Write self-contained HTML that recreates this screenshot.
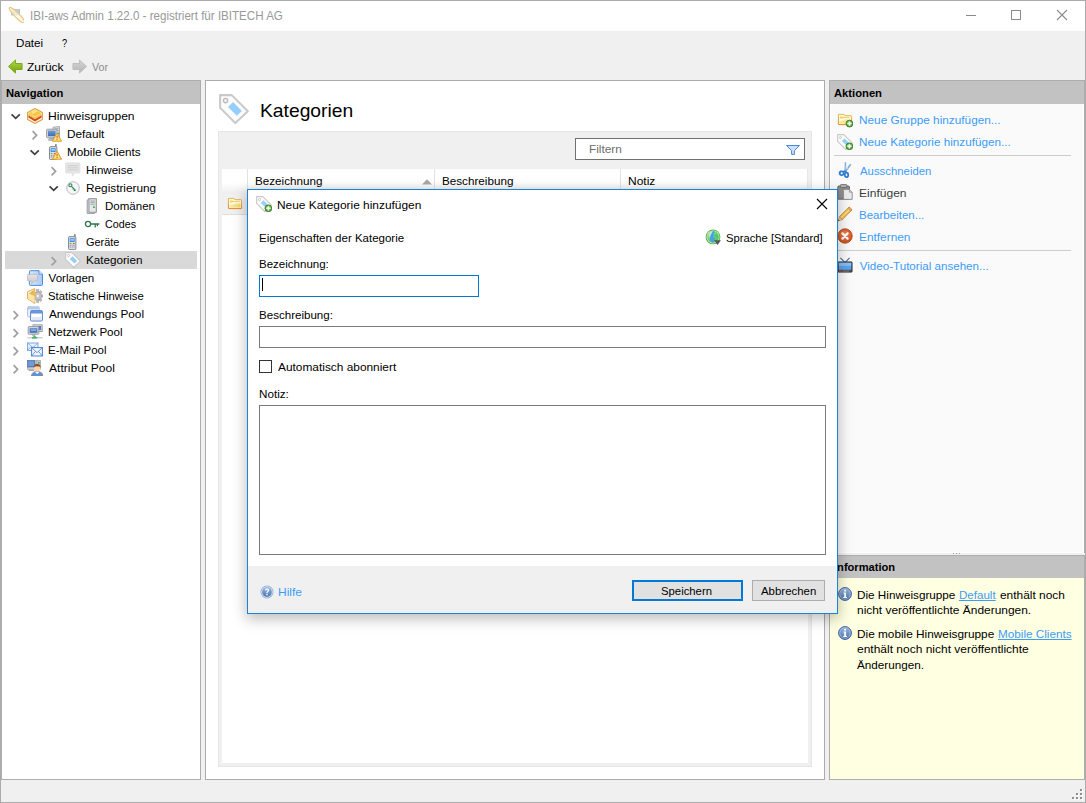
<!DOCTYPE html>
<html>
<head>
<meta charset="utf-8">
<title>IBI-aws Admin</title>
<style>
html,body{margin:0;padding:0;}
body{width:1086px;height:803px;overflow:hidden;background:#f0f0f0;font-family:"Liberation Sans",sans-serif;font-size:12px;color:#000;position:relative;}
.abs{position:absolute;}
.t{position:absolute;white-space:pre;transform-origin:0 0;}
div{box-sizing:border-box;}
</style>
</head>
<body>

<svg width="0" height="0" style="position:absolute">
<defs>
<linearGradient id="gGreen" x1="0" y1="0" x2="0" y2="1"><stop offset="0" stop-color="#b4dc3c"/><stop offset="1" stop-color="#6ea014"/></linearGradient>
<linearGradient id="gGray" x1="0" y1="0" x2="0" y2="1"><stop offset="0" stop-color="#d6d6d6"/><stop offset="1" stop-color="#b4b4b4"/></linearGradient>
<linearGradient id="gFolder" x1="0" y1="0" x2="1" y2="1"><stop offset="0" stop-color="#fdf4c4"/><stop offset="1" stop-color="#f6d24e"/></linearGradient>
<linearGradient id="gFolderS" x1="0" y1="0" x2="0" y2="1"><stop offset="0" stop-color="#e2bc48"/><stop offset="1" stop-color="#e0862c"/></linearGradient>
<linearGradient id="gScreen" x1="0" y1="0" x2="0" y2="1"><stop offset="0" stop-color="#6e9ad8"/><stop offset="1" stop-color="#3c6cb8"/></linearGradient>
<linearGradient id="gInfo" x1="0" y1="0" x2="0" y2="1"><stop offset="0" stop-color="#9db9dc"/><stop offset="1" stop-color="#4a74b0"/></linearGradient>
<radialGradient id="gGlobe" cx="0.35" cy="0.3" r="0.8"><stop offset="0" stop-color="#b8ecb0"/><stop offset="1" stop-color="#3cb850"/></radialGradient>
<radialGradient id="gRed" cx="0.5" cy="0.4" r="0.6"><stop offset="0" stop-color="#f08a5a"/><stop offset="1" stop-color="#c84a1c"/></radialGradient>
<radialGradient id="gPlus" cx="0.5" cy="0.4" r="0.6"><stop offset="0" stop-color="#8ed06a"/><stop offset="1" stop-color="#3e9a2e"/></radialGradient>
<linearGradient id="gPage" x1="0" y1="0" x2="1" y2="0"><stop offset="0" stop-color="#dbe9fc"/><stop offset="1" stop-color="#a9c9f5"/></linearGradient>
<linearGradient id="gBub" x1="0" y1="0" x2="0" y2="1"><stop offset="0" stop-color="#e4e4e4"/><stop offset="1" stop-color="#c8c8c8"/></linearGradient>
<linearGradient id="gHdr" x1="0" y1="0" x2="0" y2="1"><stop offset="0" stop-color="#ffffff"/><stop offset="0.6" stop-color="#fafafa"/><stop offset="1" stop-color="#e9e9e9"/></linearGradient>
</defs></svg>

<!-- window frame -->
<div class="abs" style="left:0;top:0;width:1086px;height:803px;border:1px solid #ababab;background:#f0f0f0;"></div>
<div class="abs" style="left:1px;top:1px;width:1084px;height:30px;background:#fff;"></div>
<!-- window controls -->
<svg class="abs" style="left:960px;top:5px" width="120" height="20" viewBox="0 0 120 20">
<path d="M6 10.5 H16" stroke="#8a8a8a" stroke-width="1" fill="none"/>
<rect x="51.5" y="5.5" width="9" height="9" stroke="#8a8a8a" stroke-width="1" fill="none"/>
<path d="M97 5 L107 15 M107 5 L97 15" stroke="#8a8a8a" stroke-width="1.1" fill="none"/>
</svg>

<!-- NAV PANEL -->
<div class="abs" style="left:1px;top:80px;width:200px;height:700px;background:#fff;border:1px solid #adadad;"></div>
<div class="abs" style="left:2px;top:81px;width:198px;height:23px;background:#c2c2c2;"></div>
<div class="abs" style="left:5px;top:251px;width:192px;height:18px;background:#d9d9d9;"></div>

<!-- CENTER PANEL -->
<div class="abs" style="left:205px;top:80px;width:620px;height:700px;background:#fff;border:1px solid #ababab;"></div>
<div class="abs" style="left:218px;top:131px;width:594px;height:636px;background:#f0f0f0;border:1px solid #e6e6e6;"></div>
<div class="abs" style="left:222px;top:169px;width:586px;height:594px;background:#fff;"></div>
<!-- filter box -->
<div class="abs" style="left:575px;top:138px;width:230px;height:22px;background:#fff;border:1px solid #707070;"></div>
<!-- table header -->
<div class="abs" style="left:222px;top:169px;width:586px;height:25px;background:linear-gradient(#fff 0,#fff 55%,#ededed 100%);"></div>
<div class="abs" style="left:247px;top:169px;width:1px;height:25px;background:#e2e2e2;"></div>
<div class="abs" style="left:434px;top:169px;width:1px;height:25px;background:#e2e2e2;"></div>
<div class="abs" style="left:620px;top:169px;width:1px;height:25px;background:#e2e2e2;"></div>
<div class="abs" style="left:807px;top:169px;width:1px;height:25px;background:#e8e8e8;"></div>
<svg class="abs" style="left:422px;top:179px" width="10" height="6" viewBox="0 0 10 6"><path d="M0 5.5 L5 0.3 L10 5.5Z" fill="#a8a8a8"/></svg>
<!-- first row -->
<div class="abs" style="left:222px;top:194px;width:586px;height:21px;background:#f0f0f0;border-bottom:1px solid #e0e0e0;"></div>

<!-- RIGHT PANEL -->
<div class="abs" style="left:829px;top:80px;width:256px;height:473px;background:#fafafa;border:1px solid #adadad;border-bottom:none;box-shadow:inset 0 0 0 1px #fff;"></div>
<div class="abs" style="left:830px;top:81px;width:254px;height:23px;background:#c2c2c2;"></div>
<div class="abs" style="left:834px;top:155px;width:237px;height:1px;background:#cdcdcd;"></div>
<div class="abs" style="left:834px;top:250px;width:237px;height:1px;background:#cdcdcd;"></div>
<!-- splitter dots -->
<div class="abs" style="left:953px;top:553px;width:1px;height:1px;background:#9a9a9a;box-shadow:3px 0 #9a9a9a,6px 0 #9a9a9a;"></div>
<!-- info panel -->
<div class="abs" style="left:829px;top:555px;width:256px;height:225px;background:#ffffe1;border:1px solid #adadad;"></div>
<div class="abs" style="left:830px;top:556px;width:254px;height:22px;background:#c2c2c2;"></div>

<!-- resize grip -->
<svg class="abs" style="left:1071px;top:789px" width="13" height="13" viewBox="0 0 13 13"><g fill="#fff" transform="translate(1,1)"><rect x="9" y="0" width="2" height="2"/><rect x="5" y="4" width="2" height="2"/><rect x="9" y="4" width="2" height="2"/><rect x="1" y="8" width="2" height="2"/><rect x="5" y="8" width="2" height="2"/><rect x="9" y="8" width="2" height="2"/></g><g fill="#8e8e8e"><rect x="9" y="0" width="2" height="2"/><rect x="5" y="4" width="2" height="2"/><rect x="9" y="4" width="2" height="2"/><rect x="1" y="8" width="2" height="2"/><rect x="5" y="8" width="2" height="2"/><rect x="9" y="8" width="2" height="2"/></g></svg>

<svg class="abs" style="left:8px;top:7px" width="16" height="16" viewBox="0 0 16 16" opacity=".8"><rect x="3.2" y="2.2" width="8.8" height="6.2" fill="#8fb0cc"/>
<rect x="4" y="3" width="7.2" height="4.6" fill="#a9c4da"/>
<path d="M5.6 6.6 L7.2 3.4 L8.8 6.6 M6.3 5.6 H8.1" stroke="#c9a03a" stroke-width=".9" fill="none"/>
<ellipse cx="9" cy="8.2" rx="10.6" ry="2.3" transform="rotate(45 9 8.2)" fill="#fff8e6" fill-opacity=".7" stroke="#ecb656" stroke-width="1.2"/></svg>
<svg class="abs" style="left:8px;top:59px" width="15" height="15" viewBox="0 0 16 15" ><path d="M0.5 7.5 L8 0.5 V4.3 H15 V10.7 H8 V14.5 Z" fill="url(#gGreen)" stroke="#78a818" stroke-width="1" stroke-linejoin="round"/></svg>
<svg class="abs" style="left:72px;top:59px" width="15" height="15" viewBox="0 0 16 15" ><path d="M15.5 7.5 L8 0.5 V4.3 H1 V10.7 H8 V14.5 Z" fill="url(#gGray)" stroke="#bdbdbd" stroke-width="1" stroke-linejoin="round"/></svg>
<svg class="abs" style="left:27px;top:108px" width="16" height="16" viewBox="0 0 16 16" ><path d="M8 0.6 L15.4 4.4 V11.6 L8 15.4 L0.6 11.6 V4.4 Z" fill="#fdf3d4" stroke="#d9a440" stroke-width="1.1" stroke-linejoin="round"/>
<path d="M8 1.6 L14.4 4.9 L8 8.6 L1.6 4.9 Z" fill="#f5c542"/>
<path d="M8 1.6 L11 3.2 L6 6 L3.5 4 Z" fill="#fbe08a"/>
<path d="M1.4 7.2 L8 11 L14.6 7.2 V9.6 L8 13.4 L1.4 9.6 Z" fill="#d8462c"/>
<path d="M1.4 5.2 L8 9 L14.6 5.2 V7.2 L8 11 L1.4 7.2 Z" fill="#f2c44a"/></svg>
<svg class="abs" style="left:8px;top:108px" width="16" height="16" viewBox="0 0 16 16" ><path d="M3.6 6.3 L7.7 10.4 L11.8 6.3" fill="none" stroke="#404040" stroke-width="1.7"/></svg>
<svg class="abs" style="left:46px;top:126px" width="16" height="16" viewBox="0 0 16 16" ><path d="M7 1.2 L13.5 0.5 V12 H7Z" fill="#d8dade" stroke="#9a9ea6" stroke-width=".8"/>
<rect x="9" y="2.5" width="3.5" height=".8" fill="#8e9298"/><rect x="9" y="4.2" width="3.5" height=".8" fill="#8e9298"/>
<rect x="0.6" y="3.2" width="10.4" height="8.6" rx="1" fill="#d4d7dc" stroke="#8f949c" stroke-width=".9"/>
<rect x="2" y="4.6" width="7.6" height="5.6" fill="url(#gScreen)"/>
<rect x="3.2" y="12" width="5" height="1.2" fill="#a8acb4"/><rect x="2.4" y="13.2" width="6.6" height="1.3" rx=".5" fill="#c2c6cc" stroke="#8f949c" stroke-width=".5"/>
<circle cx="12.6" cy="7.4" r=".9" fill="#4cb848"/><path d="M11 7.2 L15.6 15.2 H6.4 Z" fill="#fde480" stroke="#e0962a" stroke-width="1" stroke-linejoin="round"/>
<rect x="10.5" y="9.8" width="1.1" height="2.6" fill="#c07818"/><rect x="10.5" y="13" width="1.1" height="1.1" fill="#c07818"/></svg>
<svg class="abs" style="left:27px;top:126px" width="16" height="16" viewBox="0 0 16 16" ><path d="M5.6 5.2 L9.6 9.3 L5.6 13.4" fill="none" stroke="#a0a0a0" stroke-width="1.7"/></svg>
<svg class="abs" style="left:46px;top:144px" width="16" height="16" viewBox="0 0 16 16" ><rect x="9.3" y="0.2" width="1.2" height="4" fill="#555"/>
<rect x="3.5" y="2.6" width="7.4" height="13" rx="1.2" fill="#dadde2" stroke="#7c8088" stroke-width=".9"/>
<rect x="4.8" y="4.2" width="4.8" height="3.8" fill="#3a8ee8"/><rect x="5.6" y="5" width="3.2" height="1.8" fill="#9fd0fb"/>
<rect x="4.8" y="9" width="1.6" height="1" fill="#4cb848"/><rect x="8" y="9" width="1.6" height="1" fill="#e0483a"/>
<g fill="#8c9098"><rect x="4.8" y="10.8" width="1.1" height="1"/><rect x="6.65" y="10.8" width="1.1" height="1"/><rect x="8.5" y="10.8" width="1.1" height="1"/>
<rect x="4.8" y="12.5" width="1.1" height="1"/><rect x="6.65" y="12.5" width="1.1" height="1"/><rect x="8.5" y="12.5" width="1.1" height="1"/></g><path d="M11 7.2 L15.6 15.2 H6.4 Z" fill="#fde480" stroke="#e0962a" stroke-width="1" stroke-linejoin="round"/>
<rect x="10.5" y="9.8" width="1.1" height="2.6" fill="#c07818"/><rect x="10.5" y="13" width="1.1" height="1.1" fill="#c07818"/></svg>
<svg class="abs" style="left:27px;top:144px" width="16" height="16" viewBox="0 0 16 16" ><path d="M3.6 6.3 L7.7 10.4 L11.8 6.3" fill="none" stroke="#404040" stroke-width="1.7"/></svg>
<svg class="abs" style="left:65px;top:162px" width="16" height="16" viewBox="0 0 16 16" ><path d="M1.5 0.8 H14 Q15 0.8 15 1.8 V10 Q15 11 14 11 H9.5 L7.5 14.2 L7 11 H1.5 Q0.5 11 0.5 10 V1.8 Q0.5 0.8 1.5 0.8Z" fill="#e6e6e6" stroke="#dadada" stroke-width=".6"/>
<g fill="#c4c4c4"><rect x="2.4" y="3.4" width="10.8" height=".7"/><rect x="2.4" y="5.5" width="10.8" height=".7"/><rect x="2.4" y="7.6" width="10.8" height=".7"/></g></svg>
<svg class="abs" style="left:46px;top:162px" width="16" height="16" viewBox="0 0 16 16" ><path d="M5.6 5.2 L9.6 9.3 L5.6 13.4" fill="none" stroke="#a0a0a0" stroke-width="1.7"/></svg>
<svg class="abs" style="left:65px;top:180px" width="16" height="16" viewBox="0 0 16 16" ><circle cx="8" cy="8" r="6.3" fill="#f6f6f8" stroke="#b8bcc4" stroke-width="1"/>
<circle cx="5.4" cy="5.2" r="1.5" fill="none" stroke="#2e8a4e" stroke-width="1.1"/>
<path d="M6.5 6.3 L10.8 10.6 M8.6 8.4 L7.6 9.4 M10 9.8 L9 10.8" stroke="#2e8a4e" stroke-width="1.1" fill="none"/></svg>
<svg class="abs" style="left:46px;top:180px" width="16" height="16" viewBox="0 0 16 16" ><path d="M3.6 6.3 L7.7 10.4 L11.8 6.3" fill="none" stroke="#404040" stroke-width="1.7"/></svg>
<svg class="abs" style="left:84px;top:198px" width="16" height="16" viewBox="0 0 16 16" ><path d="M3.2 2.2 L5 0.8 H12.2 V14.2 L10.4 15.4 H3.2Z" fill="#d6d8dc" stroke="#8e9298" stroke-width=".9" stroke-linejoin="round"/>
<rect x="5" y="0.8" width="7.2" height="13.4" fill="#e6e8ea" stroke="#8e9298" stroke-width=".9"/>
<rect x="6.4" y="2.6" width="4.4" height=".9" fill="#8e9298"/><rect x="6.4" y="4.4" width="4.4" height=".9" fill="#8e9298"/><rect x="6.4" y="6.2" width="4.4" height=".9" fill="#a8acb2"/>
<rect x="9" y="8.4" width="1.8" height="1.6" fill="#3cae48"/></svg>
<svg class="abs" style="left:84px;top:216px" width="16" height="16" viewBox="0 0 16 16" ><circle cx="4" cy="8" r="2.6" fill="none" stroke="#2a7a4a" stroke-width="1.3"/>
<path d="M6.6 8 H15.4 M11.2 8 V11.4 M13.4 8 V10.2" stroke="#2a7a4a" stroke-width="1.3" fill="none"/></svg>
<svg class="abs" style="left:65px;top:234px" width="16" height="16" viewBox="0 0 16 16" ><rect x="9.3" y="0.2" width="1.2" height="4" fill="#555"/>
<rect x="3.5" y="2.6" width="7.4" height="13" rx="1.2" fill="#dadde2" stroke="#7c8088" stroke-width=".9"/>
<rect x="4.8" y="4.2" width="4.8" height="3.8" fill="#3a8ee8"/><rect x="5.6" y="5" width="3.2" height="1.8" fill="#9fd0fb"/>
<rect x="4.8" y="9" width="1.6" height="1" fill="#4cb848"/><rect x="8" y="9" width="1.6" height="1" fill="#e0483a"/>
<g fill="#8c9098"><rect x="4.8" y="10.8" width="1.1" height="1"/><rect x="6.65" y="10.8" width="1.1" height="1"/><rect x="8.5" y="10.8" width="1.1" height="1"/>
<rect x="4.8" y="12.5" width="1.1" height="1"/><rect x="6.65" y="12.5" width="1.1" height="1"/><rect x="8.5" y="12.5" width="1.1" height="1"/></g></svg>
<svg class="abs" style="left:65px;top:252px" width="16" height="16" viewBox="0 0 16 16" ><path d="M0.6 0.6 H6.8 L15.4 9.2 L8.7 15.5 L0.6 7.4 Z" fill="#fcfcfc" stroke="#c9c9c9" stroke-width="1.1" stroke-linejoin="round"/>
<circle cx="3.5" cy="3.5" r="1.1" fill="#fff" stroke="#bcbcbc" stroke-width=".8"/>
<path d="M4.8 6.9 L7.5 4.3 L12.2 9 L9.5 11.6 Z" fill="#96cefc"/></svg>
<svg class="abs" style="left:46px;top:252px" width="16" height="16" viewBox="0 0 16 16" ><path d="M5.6 5.2 L9.6 9.3 L5.6 13.4" fill="none" stroke="#a0a0a0" stroke-width="1.7"/></svg>
<svg class="abs" style="left:27px;top:270px" width="16" height="16" viewBox="0 0 16 16" ><path d="M3.4 0.7 H12 L15.5 4.2 V14.4 Q15.5 15.4 14.5 15.4 H3.4 Q2.4 15.4 2.4 14.4 V1.7 Q2.4 0.7 3.4 0.7Z" fill="url(#gPage)" stroke="#4a8ae0" stroke-width="1" stroke-linejoin="round"/>
<path d="M12 0.7 V4.2 H15.5" fill="#dceafc" stroke="#4a8ae0" stroke-width=".8"/>
<path d="M1.4 4.4 H9.6 Q10.6 4.4 10.6 5.4 V10 Q10.6 11 9.6 11 H7.6 L4.4 14 L5 11 H1.4 Q0.4 11 0.4 10 V5.4 Q0.4 4.4 1.4 4.4Z" fill="url(#gBub)" stroke="#b4b4b4" stroke-width=".7"/></svg>
<svg class="abs" style="left:27px;top:288px" width="16" height="16" viewBox="0 0 16 16" ><g fill="#bcbcbc" stroke="#9a9a9a" stroke-width=".5"><rect x="9.6" y="1.6" width="2.2" height="2.6"/><rect x="9.6" y="11.8" width="2.2" height="2.6"/><rect x="13.4" y="6.9" width="2.4" height="2.2"/>
<rect x="12.4" y="3" width="2.2" height="2.2" transform="rotate(45 13.5 4.1)"/><rect x="12.4" y="10.8" width="2.2" height="2.2" transform="rotate(45 13.5 11.9)"/></g>
<circle cx="10.6" cy="8" r="4" fill="#c8c8c8" stroke="#9a9a9a" stroke-width=".7"/>
<circle cx="10.8" cy="8" r="1.7" fill="#f6f6f6" stroke="#a4a4a4" stroke-width=".5"/>
<path d="M0.5 3.8 L7.8 0.5 V15.5 L0.5 10.8 Z" fill="#fdf0cc" stroke="#e0a848" stroke-width=".9" stroke-linejoin="round"/>
<path d="M7.4 1.2 V8.2 L2 5.4 Z" fill="#efb648"/>
<path d="M7.4 8.2 V14.6 L1.2 10.6 V6 Z" fill="#fbe4a8"/></svg>
<svg class="abs" style="left:27px;top:306px" width="16" height="16" viewBox="0 0 16 16" ><rect x="0.6" y="0.8" width="11.6" height="10" rx="1" fill="#eef3fb" stroke="#9db8e4" stroke-width=".9"/>
<rect x="0.6" y="0.8" width="11.6" height="2.6" rx="1" fill="#b4caec"/>
<rect x="3.6" y="4.6" width="11.8" height="10.4" rx="1" fill="#f2f5fb" stroke="#5a84d0" stroke-width="1"/>
<rect x="3.6" y="4.6" width="11.8" height="2.8" rx="1" fill="#6a94dc"/>
<rect x="4.6" y="8" width="9.8" height="6" fill="#fff"/><rect x="4.6" y="11" width="9.8" height="3" fill="#e2e8f4"/></svg>
<svg class="abs" style="left:8px;top:306px" width="16" height="16" viewBox="0 0 16 16" ><path d="M5.6 5.2 L9.6 9.3 L5.6 13.4" fill="none" stroke="#a0a0a0" stroke-width="1.7"/></svg>
<svg class="abs" style="left:27px;top:324px" width="16" height="16" viewBox="0 0 16 16" ><rect x="6" y="0.8" width="9.2" height="6.8" fill="#d8dadd" stroke="#8e9298" stroke-width=".8"/>
<rect x="10.5" y="2" width="3.6" height="4" fill="#4a7cc8"/>
<rect x="1.2" y="2.6" width="10.6" height="7.6" rx=".6" fill="#d8dadd" stroke="#8e9298" stroke-width=".9"/>
<rect x="2.6" y="4" width="7.8" height="4.8" fill="url(#gScreen)"/>
<rect x="4" y="5.6" width="5" height="1" fill="#a8c4ee"/>
<rect x="5" y="10.4" width="3.2" height="1.2" fill="#9a9ea6"/>
<rect x="0.4" y="13.2" width="15.2" height="1.2" fill="#c2c6cc"/>
<path d="M5.6 13.6 L7.2 11.6 H8 L9.6 13.6Z" fill="#48b46a"/><rect x="5" y="13" width="5.2" height="1.6" fill="#48b46a"/></svg>
<svg class="abs" style="left:8px;top:324px" width="16" height="16" viewBox="0 0 16 16" ><path d="M5.6 5.2 L9.6 9.3 L5.6 13.4" fill="none" stroke="#a0a0a0" stroke-width="1.7"/></svg>
<svg class="abs" style="left:27px;top:342px" width="16" height="16" viewBox="0 0 16 16" ><rect x="0.6" y="1" width="10.4" height="7.4" fill="#eef4fd" stroke="#7aa4e4" stroke-width="1"/><path d="M0.6 1 L5.8 5.44 L11.0 1 M0.6 8.4 L4.343999999999999 4.33 M11.0 8.4 L7.256 4.33" fill="none" stroke="#7aa4e4" stroke-width=".8"/><rect x="4.6" y="5.6" width="10.8" height="8.4" fill="#f2f6fd" stroke="#4a80d4" stroke-width="1"/><path d="M4.6 5.6 L10.0 10.64 L15.4 5.6 M4.6 14.0 L8.488 9.379999999999999 M15.4 14.0 L11.512 9.379999999999999" fill="none" stroke="#4a80d4" stroke-width=".8"/></svg>
<svg class="abs" style="left:8px;top:342px" width="16" height="16" viewBox="0 0 16 16" ><path d="M5.6 5.2 L9.6 9.3 L5.6 13.4" fill="none" stroke="#a0a0a0" stroke-width="1.7"/></svg>
<svg class="abs" style="left:27px;top:360px" width="16" height="16" viewBox="0 0 16 16" ><rect x="0.6" y="0.6" width="7.4" height="6.4" fill="#5a86cc" stroke="#4a6a9c" stroke-width=".7"/>
<rect x="1.4" y="1.4" width="5.8" height="4.6" fill="#6e9ae0"/>
<rect x="0.6" y="7.2" width="7.4" height="2.2" fill="#c8cace" stroke="#8e9298" stroke-width=".5"/>
<rect x="1.6" y="9.6" width="5.6" height="1.4" fill="#a8acb2"/>
<rect x="9" y="0.6" width="4.4" height="9" fill="#c2c4c8" stroke="#8e9298" stroke-width=".6"/><rect x="11" y="2" width="1.6" height="1.6" fill="#3cae48"/>
<path d="M4.4 16 Q4.6 11.4 10.2 11.4 Q15.8 11.4 16 16Z" fill="#4a9af0" stroke="#e0682c" stroke-width=".6"/>
<circle cx="10.2" cy="8" r="3.4" fill="#f8d4b0"/>
<path d="M6.6 7.8 Q6.6 4 10.2 4 Q13.8 4 13.8 7.8 Q12 6 10.2 6.4 Q8.4 6 6.6 7.8Z" fill="#8a4a1c"/>
<path d="M8 12 L10.2 14 L12.4 12 Z" fill="#fff"/></svg>
<svg class="abs" style="left:8px;top:360px" width="16" height="16" viewBox="0 0 16 16" ><path d="M5.6 5.2 L9.6 9.3 L5.6 13.4" fill="none" stroke="#a0a0a0" stroke-width="1.7"/></svg>
<svg class="abs" style="left:219px;top:94px" width="30" height="30" viewBox="0 0 16 16" ><path d="M0.6 0.6 H6.8 L15.4 9.2 L8.7 15.5 L0.6 7.4 Z" fill="#fcfcfc" stroke="#c9c9c9" stroke-width="1.1" stroke-linejoin="round"/>
<circle cx="3.5" cy="3.5" r="1.1" fill="#fff" stroke="#bcbcbc" stroke-width=".8"/>
<path d="M4.8 6.9 L7.5 4.3 L12.2 9 L9.5 11.6 Z" fill="#96cefc"/></svg>
<svg class="abs" style="left:786px;top:145px" width="14" height="10" viewBox="0 0 14 10" ><path d="M0.5 0.5 H13.5 L8.4 5.6 V9.4 H5.6 V5.6 Z" fill="#cfe2fb" stroke="#4a86d8" stroke-width="1" stroke-linejoin="round"/></svg>
<svg class="abs" style="left:227px;top:196px" width="16" height="16" viewBox="0 0 16 16" ><path d="M1.4 2.4 H7.2 L7.8 3.7 H14 Q14.6 3.7 14.6 4.3 V12 Q14.6 12.6 14 12.6 H2 Q1.4 12.6 1.4 12 Z" fill="#fffbe9" stroke="url(#gFolderS)" stroke-width="1" stroke-linejoin="round"/>
<path d="M2.8 4.4 H5.6 L6.4 5 H12.6 V5.9 H6.2 L5.4 6.6 H2.8Z" fill="#f1d06c"/>
<path d="M2.5 8.5 H6.4 L7.6 7.3 H13.5 V11.6 H2.5Z" fill="url(#gFolder)"/></svg>
<svg class="abs" style="left:837px;top:112px" width="16" height="16" viewBox="0 0 16 16" ><path d="M1.4 2.4 H7.2 L7.8 3.7 H14 Q14.6 3.7 14.6 4.3 V12 Q14.6 12.6 14 12.6 H2 Q1.4 12.6 1.4 12 Z" fill="#fffbe9" stroke="url(#gFolderS)" stroke-width="1" stroke-linejoin="round"/>
<path d="M2.8 4.4 H5.6 L6.4 5 H12.6 V5.9 H6.2 L5.4 6.6 H2.8Z" fill="#f1d06c"/>
<path d="M2.5 8.5 H6.4 L7.6 7.3 H13.5 V11.6 H2.5Z" fill="url(#gFolder)"/><circle cx="12.5" cy="11.6" r="3.4" fill="url(#gPlus)" stroke="#3a7e22" stroke-width=".9"/>
<path d="M12.5 9.5 V13.7 M10.4 11.6 H14.6" stroke="#fff" stroke-width="1.5"/></svg>
<svg class="abs" style="left:837px;top:134px" width="16" height="16" viewBox="0 0 16 16" ><path d="M0.6 0.6 H6.8 L15.4 9.2 L8.7 15.5 L0.6 7.4 Z" fill="#fcfcfc" stroke="#c9c9c9" stroke-width="1.1" stroke-linejoin="round"/>
<circle cx="3.5" cy="3.5" r="1.1" fill="#fff" stroke="#bcbcbc" stroke-width=".8"/>
<path d="M4.8 6.9 L7.5 4.3 L12.2 9 L9.5 11.6 Z" fill="#96cefc"/><circle cx="12.4" cy="12.3" r="3.4" fill="url(#gPlus)" stroke="#3a7e22" stroke-width=".9"/>
<path d="M12.4 10.200000000000001 V14.4 M10.3 12.3 H14.5" stroke="#fff" stroke-width="1.5"/></svg>
<svg class="abs" style="left:837px;top:162px" width="16" height="16" viewBox="0 0 16 16" ><path d="M7.8 0.2 L9.2 0.2 L9.2 10 L7.4 10 Z" fill="#7fa9d8"/>
<path d="M8.7 3.4 L9.2 3.4 L9.2 9 L8.7 9Z" fill="#d8e6f4"/>
<path d="M13.2 1.8 L14.4 2.8 L10 8.8 L8.8 7.2 Z" fill="#7fa9d8"/>
<circle cx="10.2" cy="6" r=".8" fill="#e6eff9"/>
<ellipse cx="4.7" cy="11.2" rx="2" ry="1.9" fill="none" stroke="#2f7ccb" stroke-width="1.8" transform="rotate(-20 4.7 11.2)"/>
<ellipse cx="9.5" cy="12.9" rx="1.7" ry="2.2" fill="none" stroke="#2f7ccb" stroke-width="1.8"/>
<path d="M6.4 10 L8 8.6 M9.2 10.4 L8.6 8.6" stroke="#2f7ccb" stroke-width="1.6"/></svg>
<svg class="abs" style="left:837px;top:184px" width="16" height="16" viewBox="0 0 16 16" ><rect x="0.8" y="2" width="11.6" height="13.2" rx="1" fill="#8e8e8e" stroke="#5e5e5e" stroke-width=".9"/>
<rect x="3.4" y="0.6" width="6.4" height="3" rx=".8" fill="#b4b4b4" stroke="#5e5e5e" stroke-width=".8"/>
<path d="M6.4 5.4 H12.4 L15.2 8.2 V15.4 H6.4Z" fill="#ececec" stroke="#8a8a8a" stroke-width=".9" stroke-linejoin="round"/>
<path d="M12.4 5.4 V8.2 H15.2" fill="#d4d4d4" stroke="#8a8a8a" stroke-width=".7"/></svg>
<svg class="abs" style="left:837px;top:206px" width="16" height="16" viewBox="0 0 16 16" ><path d="M12.2 1 L15 3.8 L5.2 13.6 L2.4 10.8 Z" fill="#f4c24e" stroke="#c88a24" stroke-width=".9" stroke-linejoin="round"/>
<path d="M13.2 2 L14 2.8 L4.4 12.4 L3.6 11.6Z" fill="#fbe08c"/>
<path d="M2.4 10.8 L5.2 13.6 L1 15 Z" fill="#f0d8b0" stroke="#b88a50" stroke-width=".7" stroke-linejoin="round"/>
<path d="M1 15 L1.5 13.4 L2.6 14.5Z" fill="#444"/>
<path d="M12.2 1 L15 3.8 L13.8 5 L11 2.2Z" fill="#e8a0a0" stroke="#c88a24" stroke-width=".6"/></svg>
<svg class="abs" style="left:837px;top:228px" width="16" height="16" viewBox="0 0 16 16" ><circle cx="8" cy="8" r="7.2" fill="url(#gRed)" stroke="#b44416" stroke-width=".9"/>
<path d="M5.4 5.4 L10.6 10.6 M10.6 5.4 L5.4 10.6" stroke="#fff" stroke-width="2.2" stroke-linecap="round"/></svg>
<svg class="abs" style="left:837px;top:257px" width="16" height="16" viewBox="0 0 16 16" ><path d="M3.4 0.8 L7.6 5.2 M12.6 0.8 L8.4 5.2" stroke="#4f6fa0" stroke-width="1.2" fill="none"/>
<rect x="0.8" y="4.8" width="14.4" height="10.4" rx=".8" fill="#4a4a4e" stroke="#333" stroke-width=".6"/>
<rect x="1.8" y="5.8" width="12.4" height="7" fill="#5aa4ec"/><rect x="1.8" y="5.8" width="12.4" height="3" fill="#86c0f6"/>
<rect x="2" y="13.6" width="2.6" height=".9" fill="#e04a3a"/><rect x="5.4" y="13.6" width="7" height=".9" fill="#888"/></svg>
<svg class="abs" style="left:838px;top:587px" width="14" height="14" viewBox="0 0 14 14" ><circle cx="7" cy="7" r="6.4" fill="url(#gInfo)" stroke="#3a5e9c" stroke-width="1"/>
<circle cx="7" cy="7" r="5.3" fill="none" stroke="#b8cce8" stroke-width=".7" opacity=".8"/>
<rect x="6.2" y="2.8" width="1.8" height="1.8" fill="#fff"/><path d="M5.4 5.6 H8 V10 H9 V11 H5.2 V10 H6.2 V6.6 H5.4Z" fill="#fff"/></svg>
<svg class="abs" style="left:838px;top:626px" width="14" height="14" viewBox="0 0 14 14" ><circle cx="7" cy="7" r="6.4" fill="url(#gInfo)" stroke="#3a5e9c" stroke-width="1"/>
<circle cx="7" cy="7" r="5.3" fill="none" stroke="#b8cce8" stroke-width=".7" opacity=".8"/>
<rect x="6.2" y="2.8" width="1.8" height="1.8" fill="#fff"/><path d="M5.4 5.6 H8 V10 H9 V11 H5.2 V10 H6.2 V6.6 H5.4Z" fill="#fff"/></svg>
<div class="t" style="left:29.53px;top:7.67px;font-size:12.5px;line-height:16px;height:16px;transform:scaleX(0.9262);color:#999999;">IBI-aws Admin 1.22.0 - registriert für IBITECH AG</div>
<div class="t" style="left:15.95px;top:34.98px;font-size:11.6px;line-height:16px;height:16px;transform:scaleX(1.0027);">Datei</div>
<div class="t" style="left:62.22px;top:34.98px;font-size:11.6px;line-height:16px;height:16px;transform:scaleX(0.7940);">?</div>
<div class="t" style="left:27.02px;top:58.98px;font-size:11.6px;line-height:16px;height:16px;transform:scaleX(1.0319);">Zurück</div>
<div class="t" style="left:91.55px;top:58.98px;font-size:11.6px;line-height:16px;height:16px;transform:scaleX(0.9150);color:#8c8c8c;">Vor</div>
<div class="t" style="left:5.65px;top:84.98px;font-size:11.6px;line-height:16px;height:16px;transform:scaleX(0.9676);font-weight:700;">Navigation</div>
<div class="t" style="left:47.81px;top:107.98px;font-size:11.6px;line-height:16px;height:16px;transform:scaleX(1.0414);">Hinweisgruppen</div>
<div class="t" style="left:67.03px;top:125.98px;font-size:11.6px;line-height:16px;height:16px;transform:scaleX(1.0169);">Default</div>
<div class="t" style="left:67.04px;top:143.98px;font-size:11.6px;line-height:16px;height:16px;transform:scaleX(1.0120);">Mobile Clients</div>
<div class="t" style="left:85.95px;top:161.98px;font-size:11.6px;line-height:16px;height:16px;transform:scaleX(0.9963);">Hinweise</div>
<div class="t" style="left:85.93px;top:179.98px;font-size:11.6px;line-height:16px;height:16px;transform:scaleX(1.0171);">Registrierung</div>
<div class="t" style="left:105.05px;top:197.98px;font-size:11.6px;line-height:16px;height:16px;transform:scaleX(0.9945);">Domänen</div>
<div class="t" style="left:105.45px;top:215.98px;font-size:11.6px;line-height:16px;height:16px;transform:scaleX(0.9260);">Codes</div>
<div class="t" style="left:86.35px;top:233.98px;font-size:11.6px;line-height:16px;height:16px;transform:scaleX(0.9434);">Geräte</div>
<div class="t" style="left:85.94px;top:251.98px;font-size:11.6px;line-height:16px;height:16px;transform:scaleX(1.0060);">Kategorien</div>
<div class="t" style="left:48.55px;top:269.98px;font-size:11.6px;line-height:16px;height:16px;">Vorlagen</div>
<div class="t" style="left:48.28px;top:287.98px;font-size:11.6px;line-height:16px;height:16px;transform:scaleX(0.9783);">Statische Hinweise</div>
<div class="t" style="left:48.58px;top:305.98px;font-size:11.6px;line-height:16px;height:16px;transform:scaleX(1.0166);">Anwendungs Pool</div>
<div class="t" style="left:47.85px;top:323.98px;font-size:11.6px;line-height:16px;height:16px;transform:scaleX(0.9971);">Netzwerk Pool</div>
<div class="t" style="left:47.86px;top:341.98px;font-size:11.6px;line-height:16px;height:16px;transform:scaleX(0.9870);">E-Mail Pool</div>
<div class="t" style="left:48.58px;top:359.98px;font-size:11.6px;line-height:16px;height:16px;transform:scaleX(1.0424);">Attribut Pool</div>
<div class="t" style="left:260.42px;top:97.62px;font-size:18.4px;line-height:26px;height:26px;transform:scaleX(1.0481);">Kategorien</div>
<div class="t" style="left:588.73px;top:140.98px;font-size:11.6px;line-height:16px;height:16px;transform:scaleX(1.0195);color:#6d6d6d;">Filtern</div>
<div class="t" style="left:254.94px;top:172.98px;font-size:11.6px;line-height:16px;height:16px;transform:scaleX(1.0055);">Bezeichnung</div>
<div class="t" style="left:441.64px;top:172.98px;font-size:11.6px;line-height:16px;height:16px;transform:scaleX(1.0072);">Beschreibung</div>
<div class="t" style="left:627.62px;top:172.98px;font-size:11.6px;line-height:16px;height:16px;transform:scaleX(1.0328);">Notiz</div>
<div class="t" style="left:833.52px;top:84.98px;font-size:11.6px;line-height:16px;height:16px;transform:scaleX(0.9673);font-weight:700;">Aktionen</div>
<div class="t" style="left:858.63px;top:111.98px;font-size:11.6px;line-height:16px;height:16px;transform:scaleX(1.0174);color:#3c9cf8;">Neue Gruppe hinzufügen...</div>
<div class="t" style="left:858.64px;top:133.98px;font-size:11.6px;line-height:16px;height:16px;transform:scaleX(1.0110);color:#3c9cf8;">Neue Kategorie hinzufügen...</div>
<div class="t" style="left:859.78px;top:162.98px;font-size:11.6px;line-height:16px;height:16px;transform:scaleX(0.9798);color:#3c9cf8;">Ausschneiden</div>
<div class="t" style="left:858.81px;top:184.98px;font-size:11.6px;line-height:16px;height:16px;transform:scaleX(1.0394);color:#3c3c3c;">Einfügen</div>
<div class="t" style="left:858.85px;top:206.98px;font-size:11.6px;line-height:16px;height:16px;transform:scaleX(0.9932);color:#3c9cf8;">Bearbeiten...</div>
<div class="t" style="left:858.83px;top:228.98px;font-size:11.6px;line-height:16px;height:16px;transform:scaleX(1.0233);color:#3c9cf8;">Entfernen</div>
<div class="t" style="left:859.75px;top:257.98px;font-size:11.6px;line-height:16px;height:16px;color:#3c9cf8;">Video-Tutorial ansehen...</div>
<div class="t" style="left:833.86px;top:558.98px;font-size:11.6px;line-height:16px;height:16px;transform:scaleX(0.9588);font-weight:700;">Information</div>
<div class="t" style="left:856.94px;top:586.98px;font-size:11.6px;line-height:16px;height:16px;transform:scaleX(1.0111);">Die Hinweisgruppe</div>
<div class="t" style="left:958.95px;top:586.98px;font-size:11.6px;line-height:16px;height:16px;color:#3c9cf8;text-decoration:underline;">Default</div>
<div class="t" style="left:999.79px;top:586.98px;font-size:11.6px;line-height:16px;height:16px;transform:scaleX(1.0270);">enthält noch</div>
<div class="t" style="left:856.91px;top:601.98px;font-size:11.6px;line-height:16px;height:16px;transform:scaleX(1.0283);">nicht veröffentlichte Änderungen.</div>
<div class="t" style="left:856.93px;top:625.98px;font-size:11.6px;line-height:16px;height:16px;transform:scaleX(1.0187);">Die mobile Hinweisgruppe</div>
<div class="t" style="left:998.14px;top:625.98px;font-size:11.6px;line-height:16px;height:16px;transform:scaleX(1.0106);color:#3c9cf8;text-decoration:underline;">Mobile Clients</div>
<div class="t" style="left:857.19px;top:640.98px;font-size:11.6px;line-height:16px;height:16px;transform:scaleX(1.0341);">enthält noch nicht veröffentlichte</div>
<div class="t" style="left:857.48px;top:656.98px;font-size:11.6px;line-height:16px;height:16px;transform:scaleX(1.0089);">Änderungen.</div>

<!-- DIALOG -->
<div class="abs" style="left:247px;top:189px;width:591px;height:425px;background:#fff;border:1px solid #1883d7;box-shadow:0 4px 13px 1px rgba(0,0,0,.26);"></div>
<div class="abs" style="left:248px;top:566px;width:589px;height:47px;background:#f0f0f0;"></div>
<!-- close X -->
<svg class="abs" style="left:816px;top:198px" width="12" height="12" viewBox="0 0 12 12"><path d="M1 1 L11 11 M11 1 L1 11" stroke="#000" stroke-width="1.1" fill="none"/></svg>
<!-- inputs -->
<div class="abs" style="left:259px;top:275px;width:220px;height:22px;background:#fff;border:1px solid #0078d7;"></div>
<div class="abs" style="left:262px;top:278px;width:1px;height:13px;background:#000;"></div>
<div class="abs" style="left:259px;top:326px;width:567px;height:22px;background:#fff;border:1px solid #7a7a7a;"></div>
<div class="abs" style="left:259px;top:360px;width:13px;height:13px;background:#fff;border:1px solid #333;"></div>
<div class="abs" style="left:259px;top:405px;width:567px;height:150px;background:#fff;border:1px solid #7a7a7a;"></div>
<!-- buttons -->
<div class="abs" style="left:632px;top:580px;width:111px;height:21px;background:#e1e1e1;border:2px solid #0078d7;"></div>
<div class="abs" style="left:752px;top:580px;width:73px;height:21px;background:#e1e1e1;border:1px solid #adadad;"></div>

<svg class="abs" style="left:256px;top:196px" width="16" height="16" viewBox="0 0 16 16" ><path d="M0.6 0.6 H6.8 L15.4 9.2 L8.7 15.5 L0.6 7.4 Z" fill="#fcfcfc" stroke="#c9c9c9" stroke-width="1.1" stroke-linejoin="round"/>
<circle cx="3.5" cy="3.5" r="1.1" fill="#fff" stroke="#bcbcbc" stroke-width=".8"/>
<path d="M4.8 6.9 L7.5 4.3 L12.2 9 L9.5 11.6 Z" fill="#96cefc"/><circle cx="12.4" cy="12.3" r="3.4" fill="url(#gPlus)" stroke="#3a7e22" stroke-width=".9"/>
<path d="M12.4 10.200000000000001 V14.4 M10.3 12.3 H14.5" stroke="#fff" stroke-width="1.5"/></svg>
<svg class="abs" style="left:705px;top:229px" width="16" height="16" viewBox="0 0 16 16" ><circle cx="8" cy="7.9" r="7.4" fill="#52b152"/>
<circle cx="8" cy="7.9" r="6.5" fill="#dff2c8"/>
<circle cx="8" cy="7.9" r="5.8" fill="url(#gGlobe)"/>
<path d="M7.6 2.4 Q9.4 2.2 10.4 3 L8.4 5 L9.6 6.4 L8 7.2 L9.8 8.8 L9.4 13 Q7 14 5.6 12.6 L4.8 9 L5.6 6 Z" fill="#4a9fe2"/>
<path d="M7.6 2.4 L5.6 6 L4.9 8.4 Q3.2 6.4 4.4 4.2 Q5.6 2.6 7.6 2.4Z" fill="#c4e8d8" opacity=".9"/>
<path d="M9.4 5.4 Q11.6 3.8 12.8 5.6 Q13.8 7.6 13 9.4 L9.6 7.8 L8.6 6.6Z" fill="#48d060"/>
<path d="M9.2 11.3 H15.9 L12.55 15.9 Z" fill="#555"/></svg>
<svg class="abs" style="left:260px;top:585px" width="14" height="14" viewBox="0 0 14 14" ><circle cx="7" cy="7" r="6.5" fill="#88a8da"/>
<circle cx="7" cy="7" r="5.7" fill="#e4ecf8"/>
<circle cx="7" cy="7" r="4.9" fill="url(#gInfo)"/>
<path d="M4.9 5.5 Q4.9 3.3 7 3.3 Q9.2 3.3 9.2 5.2 Q9.2 6.3 8 7.1 Q7.6 7.4 7.6 8.2 H6.3 Q6.2 7 7 6.4 Q7.8 5.9 7.8 5.2 Q7.8 4.5 7 4.5 Q6.3 4.5 6.3 5.5Z" fill="#fff"/><rect x="6.3" y="9" width="1.4" height="1.4" fill="#fff"/></svg>
<div class="t" style="left:276.72px;top:196.98px;font-size:11.6px;line-height:16px;height:16px;transform:scaleX(1.0273);">Neue Kategorie hinzufügen</div>
<div class="t" style="left:258.66px;top:229.98px;font-size:11.6px;line-height:16px;height:16px;transform:scaleX(0.9921);">Eigenschaften der Kategorie</div>
<div class="t" style="left:725.89px;top:229.98px;font-size:11.6px;line-height:16px;height:16px;transform:scaleX(0.9681);">Sprache [Standard]</div>
<div class="t" style="left:259.25px;top:255.98px;font-size:11.6px;line-height:16px;height:16px;transform:scaleX(0.9934);">Bezeichnung:</div>
<div class="t" style="left:259.25px;top:306.98px;font-size:11.6px;line-height:16px;height:16px;transform:scaleX(0.9971);">Beschreibung:</div>
<div class="t" style="left:277.68px;top:358.98px;font-size:11.6px;line-height:16px;height:16px;transform:scaleX(1.0247);">Automatisch abonniert</div>
<div class="t" style="left:259.24px;top:385.98px;font-size:11.6px;line-height:16px;height:16px;transform:scaleX(1.0063);">Notiz:</div>
<div class="t" style="left:278.02px;top:583.98px;font-size:11.6px;line-height:16px;height:16px;transform:scaleX(1.0310);color:#3c9cf8;">Hilfe</div>
<div class="t" style="left:661.19px;top:582.98px;font-size:11.6px;line-height:16px;height:16px;transform:scaleX(0.9759);">Speichern</div>
<div class="t" style="left:760.88px;top:582.98px;font-size:11.6px;line-height:16px;height:16px;transform:scaleX(0.9855);">Abbrechen</div>

</body>
</html>
